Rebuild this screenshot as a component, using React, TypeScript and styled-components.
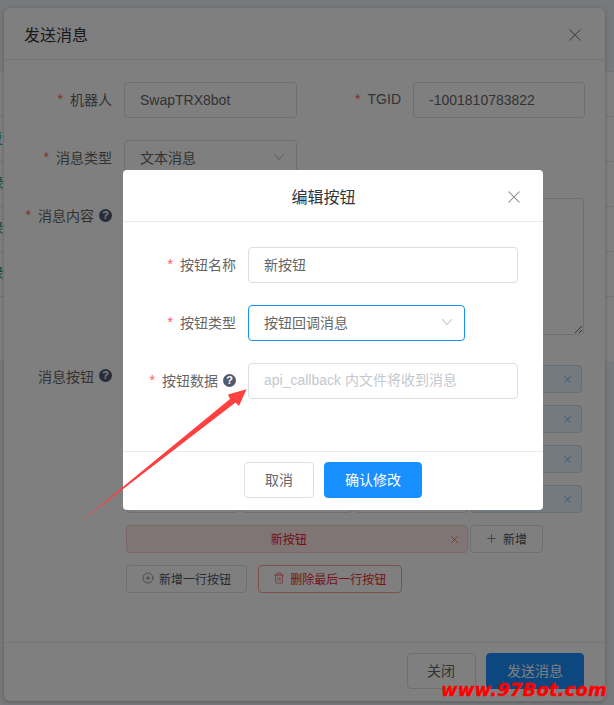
import React from "react";
import styled, { createGlobalStyle } from "styled-components";
import { CirclePlus, Plus, Trash2 } from "lucide-react";

const Global = createGlobalStyle`
  html, body { margin: 0; padding: 0; background: #f0f2f5; }
  * { box-sizing: border-box; }
  body { font-family: "Liberation Sans", "Noto Sans CJK SC", sans-serif; font-size: 14px; }
`;

const Page = styled.div`
  position: relative;
  width: 614px;
  height: 705px;
  overflow: hidden;
  background: #f0f2f5;
`;
const Table = styled.div`
  margin-top: 71px;
  background: #fff;
  padding-bottom: 20px;
`;
const TableRow = styled.div`
  height: 45px;
  border-top: 1px solid #e8e8e8;
  padding-bottom: 4px;
  display: flex;
  align-items: center;
  overflow: hidden;
`;
const RowText = styled.span`
  margin-left: -11px;
  color: #17a06e;
  font-size: 14px;
`;
const Mask = styled.div`
  position: absolute;
  inset: 0;
  background: rgba(0, 0, 0, 0.5);
`;
const OuterModal = styled.div`
  position: absolute;
  left: 4px;
  top: 8px;
  width: 601px;
  height: 693px;
  background: #fff;
  border-radius: 6px;
  box-shadow: 0 1px 4px rgba(0, 0, 0, 0.25);
  display: flex;
  flex-direction: column;
`;
const OuterHeader = styled.div`
  height: 52px;
  flex: none;
  border-bottom: 1px solid #e8eaec;
  display: flex;
  align-items: center;
  justify-content: space-between;
  padding: 0 24px 0 20px;
  font-size: 16px;
  color: #333;
  svg { margin-top: 3px; }
`;
const CloseIcon = styled.svg<{ $c?: string }>`
  stroke: ${(p) => p.$c || "#808080"};
  stroke-width: 1.05;
  fill: none;
  display: block;
`;
const OuterForm = styled.div`
  flex: 1;
  display: grid;
  grid-template-columns: 120px 173px 116px 172px;
  grid-auto-rows: min-content;
  row-gap: 22px;
  padding-top: 22px;
`;
const Label = styled.label<{ $low?: boolean }>`
  height: 36px;
  display: flex;
  align-items: center;
  justify-content: flex-end;
  padding: ${(p) => (p.$low ? "1px 12px 0 0" : "0 12px 2px 0")};
  color: #666;
  font-size: 14px;
  white-space: nowrap;
`;
const Star = styled.span`
  color: #ff5a5a;
  margin-right: 7px;
  font-family: "Liberation Sans", sans-serif;
`;
const Help = styled.span`
  width: 13px;
  height: 13px;
  border-radius: 50%;
  background: #515a6e;
  color: #fff;
  font-size: 11px;
  font-weight: 700;
  line-height: 13px;
  text-align: center;
  margin-left: 5px;
  font-family: "Liberation Sans", sans-serif;
  flex: none;
`;
const Input = styled.input<{ $cjk?: boolean }>`
  display: block;
  width: 100%;
  height: 36px;
  border: 1px solid #dcdee2;
  border-radius: 4px;
  padding: 0 15px ${(p) => (p.$cjk ? "2px" : "0")};
  font: 14px "Liberation Sans", "Noto Sans CJK SC", sans-serif;
  color: #666;
  background: #fff;
  outline: none;
  &::placeholder { color: #c5c8ce; opacity: 1; }
`;
const SelectBox = styled.div<{ $focus?: boolean }>`
  height: 36px;
  border: 1px solid ${(p) => (p.$focus ? "#1890ff" : "#dcdee2")};
  border-radius: 4px;
  padding: 0 11px 2px 15px;
  display: flex;
  align-items: center;
  justify-content: space-between;
  color: #666;
  background: #fff;
  font-size: 14px;
`;
const Chevron = styled.svg`
  width: 12px;
  height: 8px;
  stroke: #c0c4cc;
  stroke-width: 1.1;
  fill: none;
`;
const TextArea = styled.textarea`
  grid-column: span 3;
  display: block;
  width: 460px;
  height: 137px;
  border: 1px solid #dcdee2;
  border-radius: 4px;
  resize: vertical;
  outline: none;
  background: #fff;
  padding: 6px 15px;
  margin: 0;
`;
const Spacer = styled.div`
  grid-column: span 2;
`;
const Editor = styled.div`
  grid-column: span 3;
  width: 456px;
  margin-left: 2px;
  padding-top: 8px;
  display: grid;
  grid-template-columns: repeat(4, 1fr);
  column-gap: 2px;
  row-gap: 12px;
`;
const Cell = styled.div<{ $blue?: boolean }>`
  height: 28px;
  border-radius: 4px;
  border: 1px solid ${(p) => (p.$blue ? "#c6dde9" : "#dcdee2")};
  background: ${(p) => (p.$blue ? "#e8f6ff" : "#fff")};
  display: flex;
  align-items: center;
  justify-content: flex-end;
  padding-right: 10px;
`;
const RedCell = styled.div`
  grid-column: span 3;
  height: 28px;
  border-radius: 4px;
  border: 1px solid #f0d0cc;
  background: #ffeae8;
  color: #e8202a;
  font-size: 12px;
  display: flex;
  align-items: center;
  padding-right: 9px;
  span { flex: 1; text-align: center; margin-bottom: 2px; }
`;
const SmallBtn = styled.div<{ $danger?: boolean; $w: number }>`
  width: ${(p) => p.$w}px;
  height: 28px;
  border-radius: 4px;
  border: 1px solid ${(p) => (p.$danger ? "#ff9e9e" : "#dcdee2")};
  color: ${(p) => (p.$danger ? "#ed2a30" : "#555")};
  background: #fff;
  font-size: 12px;
  padding-bottom: 2px;
  display: flex;
  align-items: center;
  justify-content: center;
  gap: 5px;
`;
const Actions = styled.div`
  grid-column: span 4;
  display: flex;
  gap: 10.5px;
`;
const OuterFooter = styled.div`
  flex: none;
  border-top: 1px solid #e8eaec;
  padding: 10px 21px 12px 0;
  display: flex;
  justify-content: flex-end;
  gap: 10.5px;
`;
const Btn = styled.div<{ $primary?: boolean; $w: number }>`
  width: ${(p) => p.$w}px;
  height: 36px;
  border-radius: 4px;
  border: 1px solid ${(p) => (p.$primary ? "#1890ff" : "#dcdee2")};
  background: ${(p) => (p.$primary ? "#1890ff" : "#fff")};
  color: ${(p) => (p.$primary ? "#fff" : "#666")};
  padding-bottom: 2px;
  display: flex;
  align-items: center;
  justify-content: center;
  font-size: 14px;
`;
const Dialog = styled.div`
  position: absolute;
  left: 123px;
  top: 170px;
  width: 420px;
  height: 340px;
  background: #fff;
  border-radius: 4px;
  display: flex;
  flex-direction: column;
`;
const DialogHeader = styled.div`
  position: relative;
  flex: none;
  height: 52px;
  border-bottom: 1px solid #e8eaec;
  padding: 0 19px 0 0;
  display: flex;
  align-items: center;
  justify-content: center;
  font-size: 16px;
  color: #333;
`;
const DialogClose = styled.div`
  position: absolute;
  right: 23px;
  top: 21px;
`;
const DialogForm = styled.div`
  flex: 1;
  padding-top: 25px;
  display: grid;
  grid-template-columns: 125px 270px;
  grid-auto-rows: min-content;
  row-gap: 22px;
`;
const DialogSelect = styled(SelectBox)`
  width: 217px;
`;
const DialogFooter = styled.div`
  flex: none;
  border-top: 1px solid #e8eaec;
  padding: 10px 0 12px;
  display: flex;
  justify-content: center;
  gap: 10px;
`;
const ArrowLayer = styled.svg`
  position: absolute;
  inset: 0;
  width: 614px;
  height: 705px;
  pointer-events: none;
`;
const Watermark = styled.div`
  position: absolute;
  left: 441px;
  top: 680px;
  color: #f00;
  font: italic 700 18px "DejaVu Sans", sans-serif;
  letter-spacing: 0.15px;
  -webkit-text-stroke: 0.3px #f00;
  line-height: 20px;
  white-space: nowrap;
`;

const X = ({ c, s = 12 }: { c?: string; s?: number }) => (
  <CloseIcon $c={c} width={s} height={s} viewBox="0 0 12 12">
    <path d="M0.5 0.5 L11.5 11.5 M11.5 0.5 L0.5 11.5" />
  </CloseIcon>
);
const Down = () => (
  <Chevron viewBox="0 0 12 8">
    <path d="M1 1 L6 6.5 L11 1" />
  </Chevron>
);

export default function App() {
  const rows = [0, 1, 2, 3];
  return (
    <Page>
      <Global />
      <Table>
        <TableRow />
        {["复制", "绿色", "绿色", "绿色"].map((t, i) => (
          <TableRow key={i}>
            <RowText>{t}</RowText>
          </TableRow>
        ))}
        <TableRow />
      </Table>
      <OuterModal>
        <OuterHeader>
          发送消息
          <X />
        </OuterHeader>
        <OuterForm>
          <Label><Star>*</Star>机器人</Label>
          <Input readOnly defaultValue="SwapTRX8bot" />
          <Label><Star>*</Star>TGID</Label>
          <Input readOnly defaultValue="-1001810783822" />
          <Label><Star>*</Star>消息类型</Label>
          <SelectBox>文本消息<Down /></SelectBox>
          <Spacer />
          <Label><Star>*</Star>消息内容<Help>?</Help></Label>
          <TextArea readOnly />
          <Label $low>消息按钮<Help>?</Help></Label>
          <Editor>
            {rows.map((r) => (
              <React.Fragment key={r}>
                <Cell />
                <Cell />
                <Cell />
                <Cell $blue><X c="#2d8cf0" s={7} /></Cell>
              </React.Fragment>
            ))}
            <RedCell>
              <span>新按钮</span>
              <X c="#ed4014" s={7} />
            </RedCell>
            <SmallBtn $w={73}><Plus size={13} strokeWidth={1.2} />新增</SmallBtn>
            <Actions>
              <SmallBtn $w={121}><CirclePlus size={12} strokeWidth={1.2} />新增一行按钮</SmallBtn>
              <SmallBtn $w={144.5} $danger><Trash2 size={12} strokeWidth={1.2} />删除最后一行按钮</SmallBtn>
            </Actions>
          </Editor>
        </OuterForm>
        <OuterFooter>
          <Btn $w={69}>关闭</Btn>
          <Btn $w={98} $primary>发送消息</Btn>
        </OuterFooter>
      </OuterModal>
      <Mask />
      <Dialog>
        <DialogHeader>
          编辑按钮
          <DialogClose><X /></DialogClose>
        </DialogHeader>
        <DialogForm>
          <Label><Star>*</Star>按钮名称</Label>
          <Input $cjk readOnly defaultValue="新按钮" />
          <Label><Star>*</Star>按钮类型</Label>
          <DialogSelect $focus>按钮回调消息<Down /></DialogSelect>
          <Label><Star>*</Star>按钮数据<Help>?</Help></Label>
          <Input $cjk readOnly placeholder="api_callback 内文件将收到消息" />
        </DialogForm>
        <DialogFooter>
          <Btn $w={70}>取消</Btn>
          <Btn $w={98} $primary>确认修改</Btn>
        </DialogFooter>
      </Dialog>
      <ArrowLayer viewBox="0 0 614 705">
        <polygon points="77.3,524.3 230,399 228,394.5 246.5,389.3 239,406 235.5,402.5" fill="#ff4040" />
      </ArrowLayer>
      <Watermark>www.97Bot.com</Watermark>
    </Page>
  );
}
